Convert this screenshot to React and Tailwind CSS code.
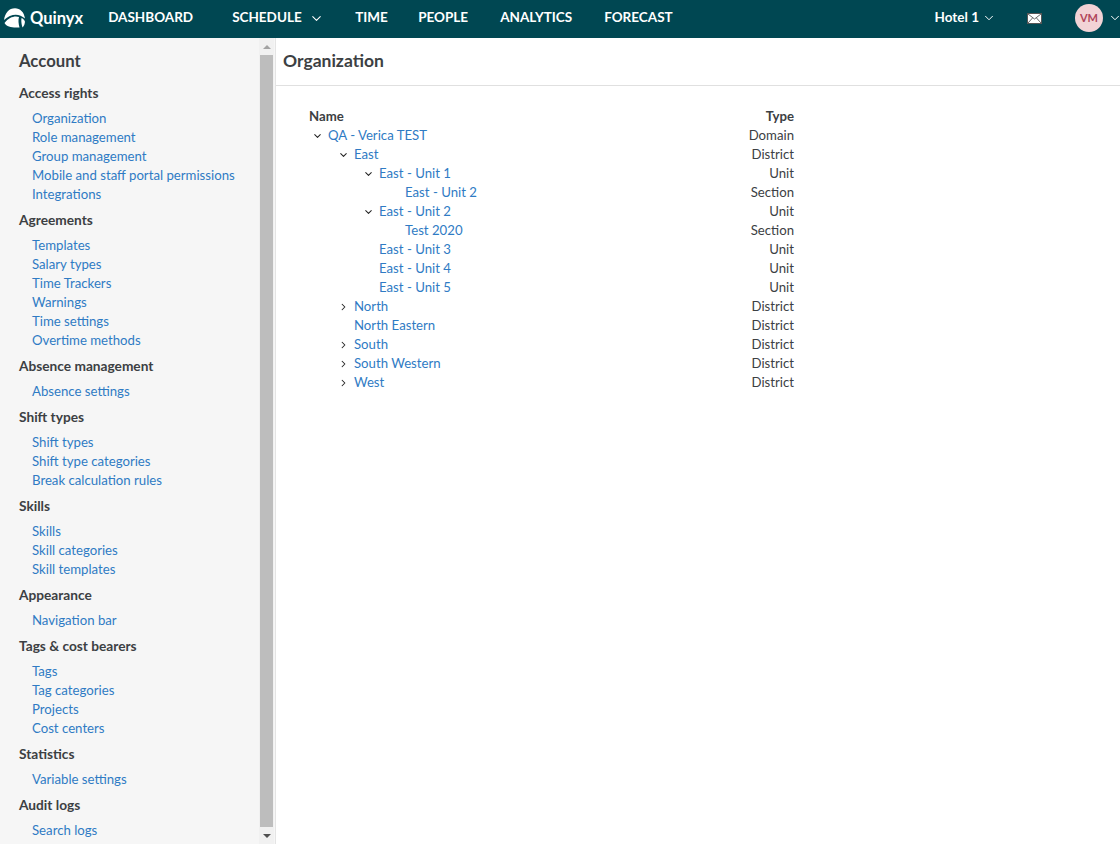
import { ChevronDown, ChevronRight } from 'lucide-react';

const sections = [
    { title: 'Access rights', items: ['Organization', 'Role management', 'Group management', 'Mobile and staff portal permissions', 'Integrations'] },
    { title: 'Agreements', items: ['Templates', 'Salary types', 'Time Trackers', 'Warnings', 'Time settings', 'Overtime methods'] },
    { title: 'Absence management', items: ['Absence settings'] },
    { title: 'Shift types', items: ['Shift types', 'Shift type categories', 'Break calculation rules'] },
    { title: 'Skills', items: ['Skills', 'Skill categories', 'Skill templates'] },
    { title: 'Appearance', items: ['Navigation bar'] },
    { title: 'Tags & cost bearers', items: ['Tags', 'Tag categories', 'Projects', 'Cost centers'] },
    { title: 'Statistics', items: ['Variable settings'] },
    { title: 'Audit logs', items: ['Search logs'] },
];

const tree = [
    { name: 'QA - Verica TEST', type: 'Domain', depth: 0, icon: 'open' },
    { name: 'East', type: 'District', depth: 1, icon: 'open' },
    { name: 'East - Unit 1', type: 'Unit', depth: 2, icon: 'open' },
    { name: 'East - Unit 2', type: 'Section', depth: 3 },
    { name: 'East - Unit 2', type: 'Unit', depth: 2, icon: 'open' },
    { name: 'Test 2020', type: 'Section', depth: 3 },
    { name: 'East - Unit 3', type: 'Unit', depth: 2 },
    { name: 'East - Unit 4', type: 'Unit', depth: 2 },
    { name: 'East - Unit 5', type: 'Unit', depth: 2 },
    { name: 'North', type: 'District', depth: 1, icon: 'closed' },
    { name: 'North Eastern', type: 'District', depth: 1 },
    { name: 'South', type: 'District', depth: 1, icon: 'closed' },
    { name: 'South Western', type: 'District', depth: 1, icon: 'closed' },
    { name: 'West', type: 'District', depth: 1, icon: 'closed' },
];

const depthPad = ['pl-[3px]', 'pl-[29px]', 'pl-[54px]', 'pl-[80px]'];

const Logo = () => (
    <svg width="22" height="20" viewBox="0 0 22 20" className="shrink-0 mt-[2px]">
        <path d="M0 12C1 5 5 0.3 11 0.3C16 0.3 20 4 21 10.5C15 5 7 5.5 0 12Z" fill="#fff" />
        <path d="M0.5 15C5 9 11 7.5 15 9C14 12 14.5 16 15.5 19.5C8 20 3 19 0.5 15Z" fill="#fff" />
        <path d="M17.5 10C19 10.5 20 11.5 21 13.5C20.8 16 20 18 18.5 19.5C17.5 16.5 17 13 17.5 10Z" fill="#fff" />
    </svg>
);

const NavLink = ({ children, className }) => (
    <span className={`text-[13.5px] font-bold text-white ${className}`}>{children}</span>
);

const App = () => {
    return (
        <div className="h-[844px] w-[1120px] overflow-hidden flex flex-col bg-white text-[#3c4043] font-['Lato','Noto_Sans',sans-serif] text-[13.2px]">
            {/* Top bar */}
            <header className="h-[38px] shrink-0 bg-[#004752] flex items-center pl-[4px] pb-[4px]">
                <Logo />
                <span className="ml-[4px] mt-[2px] text-[16.5px] font-bold text-white">Quinyx</span>
                <NavLink className="ml-[25px] w-[85px]">DASHBOARD</NavLink>
                <NavLink className="ml-[39px] w-[69px]">SCHEDULE</NavLink>
                <ChevronDown size={15} strokeWidth={1.7} className="ml-[8px] mt-[2px] text-white" />
                <NavLink className="ml-[31px] w-[31px]">TIME</NavLink>
                <NavLink className="ml-[32px] w-[50px]">PEOPLE</NavLink>
                <NavLink className="ml-[32px] w-[72px]">ANALYTICS</NavLink>
                <NavLink className="ml-[32px] w-[68px]">FORECAST</NavLink>
                <div className="ml-auto flex items-center mt-[2px]">
                    <span className="text-[13.5px] font-bold text-white -mt-[2px]">Hotel 1</span>
                    <ChevronDown size={14} strokeWidth={1.7} className="ml-[3px] -mt-[1px] text-white" />
                    <svg width="15" height="11" viewBox="0 0 15 11" className="ml-[31px]">
                        <rect x="0.5" y="0.5" width="14" height="10" fill="#fff" stroke="#555" />
                        <path d="M1 1L7.5 6L14 1M1 10L5.5 5M14 10L9.5 5" fill="none" stroke="#666" strokeWidth="1" />
                    </svg>
                    <div className="ml-[33px] w-[28px] h-[28px] rounded-full bg-[#f2d3d6] flex items-center justify-center text-[11px] font-bold text-[#b0455a]">VM</div>
                    <ChevronDown size={14} strokeWidth={1.7} className="ml-[5px] mr-[-2px] text-white" />
                </div>
            </header>

            <div className="flex flex-1 min-h-0">
                {/* Side menu */}
                <aside className="w-[276px] shrink-0 flex bg-[#f6f6f6] border-r border-[#e4e4e4]">
                    <nav className="flex-1 min-w-0 overflow-hidden pl-[19px] pt-[13px]">
                        <h1 className="text-[16.7px] leading-[20px] font-bold mb-[12px]">Account</h1>
                        {sections.map((section) => (
                            <div key={section.title} className="mb-[6px]">
                                <h2 className="text-[13.7px] leading-[19px] font-bold mb-[7px]">{section.title}</h2>
                                {section.items.map((item) => (
                                    <a key={item} className="block pl-[13px] leading-[19px] text-[#2f7bc4]">{item}</a>
                                ))}
                            </div>
                        ))}
                    </nav>
                    <div className="w-[15px] shrink-0 mr-[1px] bg-[#f1f1f1] flex flex-col items-center">
                        <div className="h-[17px] flex items-center justify-center">
                            <div className="w-0 h-0 border-x-[4px] border-x-transparent border-b-[4px] border-b-[#a3a3a3]" />
                        </div>
                        <div className="w-[13px] flex-1 bg-[#bdbdbd]" />
                        <div className="h-[17px] flex items-center justify-center">
                            <div className="w-0 h-0 border-x-[4px] border-x-transparent border-t-[4px] border-t-[#505050]" />
                        </div>
                    </div>
                </aside>

                {/* Main */}
                <main className="flex-1 min-w-0">
                    <div className="h-[48px] border-b border-[#e0e0e0] pl-[7px] flex items-center">
                        <h1 className="text-[17.5px] font-bold">Organization</h1>
                    </div>
                    <div className="pl-[33px] pt-[21px] w-[518px]">
                        <div className="flex justify-between h-[19px] leading-[19px] font-bold">
                            <span>Name</span>
                            <span>Type</span>
                        </div>
                        {tree.map((row, idx) => (
                            <div key={idx} className="flex justify-between h-[19px] leading-[19px]">
                                <div className={`flex items-center ${depthPad[row.depth]}`}>
                                    <span className="w-[11px] mr-[5px] flex items-center justify-center text-[#222]">
                                        {row.icon === 'open' && <ChevronDown size={12} strokeWidth={2.2} />}
                                        {row.icon === 'closed' && <ChevronRight size={12} strokeWidth={2.2} />}
                                    </span>
                                    <a className="text-[#2f7bc4]">{row.name}</a>
                                </div>
                                <span>{row.type}</span>
                            </div>
                        ))}
                    </div>
                </main>
            </div>
        </div>
    );
};

export default App;
